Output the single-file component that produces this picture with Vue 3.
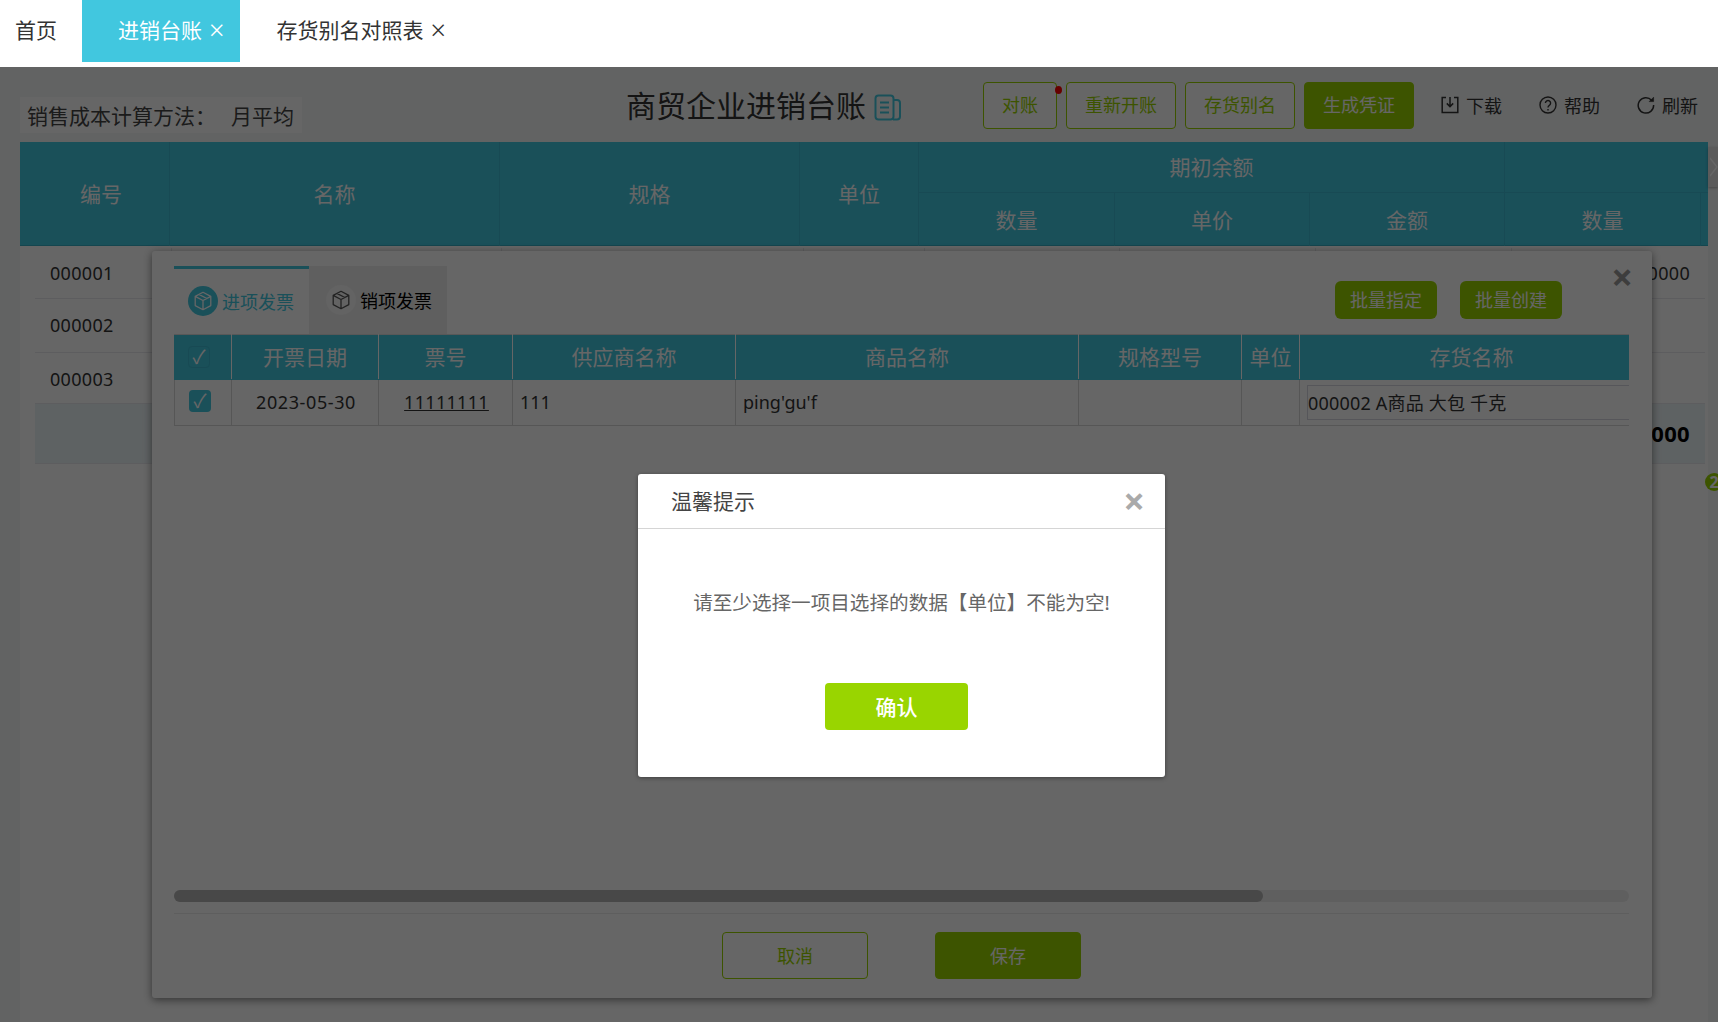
<template>
  <div class="page">
    <div class="tabs">
      <div class="tab tab-home">首页</div>
      <div class="tab tab-active">进销台账<span class="tab-x">×</span></div>
      <div class="tab">存货别名对照表<span class="tab-x">×</span></div>
    </div>

    <div class="main">
      <div class="toolbar">
        <div class="method"><span class="method-label">销售成本计算方法：</span>月平均</div>
        <div class="title">商贸企业进销台账</div>
        <svg class="title-icon" viewBox="0 0 28 27" fill="none" stroke="#41c7df" stroke-width="2">
          <rect x="1.5" y="1.5" width="18" height="24" rx="3" />
          <path d="M20 6h3a3 3 0 0 1 3 3v13.5a3 3 0 0 1-3 3h-4" />
          <path d="M6 8.5h9M6 13.5h9M6 18.5h9" />
        </svg>
        <div class="actions">
          <button class="btn btn-dot">对账<i class="dot"></i></button>
          <button class="btn">重新开账</button>
          <button class="btn">存货别名</button>
          <button class="btn btn-solid">生成凭证</button>
        </div>
        <div class="links">
          <span class="link link-down">
            <svg viewBox="0 0 18 18" fill="none" stroke="#333" stroke-width="1.5">
              <path d="M5 1.5H1.2v15h15.6v-15H13" />
              <path d="M9 1v9M5.8 7.4 9 10.6l3.2-3.2" />
            </svg>下载
          </span>
          <span class="link link-help">
            <svg viewBox="0 0 18 18" fill="none" stroke="#333" stroke-width="1.4">
              <circle cx="9" cy="9" r="8" />
              <path d="M6.4 7a2.6 2.6 0 1 1 3.9 2.3c-.9.5-1.3 1-1.3 2.2" />
              <path d="M9 13v1.4" />
            </svg>帮助
          </span>
          <span class="link link-refresh">
            <svg viewBox="0 0 18 18" fill="none" stroke="#333" stroke-width="1.5">
              <path d="M14.6 4.2A7.7 7.7 0 1 0 16.6 9" />
              <path d="M16.6 1.2v4.4h-4.4z" fill="#333" stroke-width="0.6" />
            </svg>刷新
          </span>
        </div>
      </div>

      <div class="sheet">
        <div class="grid-head">
          <div class="hc span-2 hc-code">编号</div>
          <div class="hc span-2">名称</div>
          <div class="hc span-2">规格</div>
          <div class="hc span-2">单位</div>
          <div class="hc group">期初余额</div>
          <div class="hc group-rest"></div>
          <div class="hc">数量</div>
          <div class="hc">单价</div>
          <div class="hc">金额</div>
          <div class="hc">数量</div>
          <div class="hc hc-scroll"></div>
        </div>
        <div class="grid-body">
          <div v-for="row in rows" :key="row.code" class="row" :class="row.cls">
            <div class="cell cell-code">{{ row.code }}</div>
            <div class="cell"></div>
            <div class="cell"></div>
            <div class="cell"></div>
            <div class="cell"></div>
            <div class="cell"></div>
            <div class="cell"></div>
            <div class="cell cell-end">{{ row.end }}</div>
          </div>
        </div>
      </div>

      <div class="side-arrow">
        <svg viewBox="0 0 8 24" fill="none" stroke="#fff" stroke-width="1.4"><path d="M0 3l7 9-7 9" /></svg>
      </div>
      <div class="badge">2</div>
    </div>

    <div class="invoice-modal">
      <span class="modal-close">×</span>
      <div class="modal-top">
        <div class="inv-tab inv-tab-on">
          <span class="cube cube-on">
            <svg viewBox="0 0 24 24" fill="none" stroke="#fff" stroke-width="1.4" stroke-linejoin="round">
              <path d="M12 2.5 20.5 7v10L12 21.5 3.5 17V7zM3.5 7 12 11.5 20.5 7M12 11.5v10M7.5 4.8l8.7 4.5" />
            </svg>
          </span>进项发票
        </div>
        <div class="inv-tab inv-tab-off">
          <span class="cube cube-off">
            <svg viewBox="0 0 24 24" fill="none" stroke="#555" stroke-width="1.4" stroke-linejoin="round">
              <path d="M12 2.5 20.5 7v10L12 21.5 3.5 17V7zM3.5 7 12 11.5 20.5 7M12 11.5v10M7.5 4.8l8.7 4.5" />
            </svg>
          </span>销项发票
        </div>
        <div class="modal-actions">
          <button class="btn-small">批量指定</button>
          <button class="btn-small">批量创建</button>
        </div>
      </div>

      <div class="inv-wrap">
        <table class="inv-table">
          <colgroup>
            <col v-for="w in colWidths" :key="w.k" :style="{ width: w.v + 'px' }" />
          </colgroup>
          <thead>
            <tr>
              <th><span class="check check-head">✓</span></th>
              <th>开票日期</th>
              <th>票号</th>
              <th>供应商名称</th>
              <th>商品名称</th>
              <th>规格型号</th>
              <th>单位</th>
              <th>存货名称</th>
            </tr>
          </thead>
          <tbody>
            <tr>
              <td><span class="check check-on">✓</span></td>
              <td class="center date">2023-05-30</td>
              <td class="center ticket"><u>11111111</u></td>
              <td>111</td>
              <td>ping'gu'f</td>
              <td></td>
              <td></td>
              <td class="td-input"><div class="fake-input">000002 A商品 大包 千克</div></td>
            </tr>
          </tbody>
        </table>
      </div>

      <div class="scroll-track"><div class="scroll-thumb"></div></div>
      <div class="modal-foot">
        <button class="foot-btn">取消</button>
        <button class="foot-btn foot-save">保存</button>
      </div>
    </div>

    <div class="shade"></div>

    <div class="dialog">
      <div class="dialog-head">
        <span>温馨提示</span>
        <span class="dialog-close">×</span>
      </div>
      <div class="dialog-msg">请至少选择一项目选择的数据【单位】不能为空!</div>
      <button class="dialog-ok">确认</button>
    </div>
  </div>
</template>

<script setup>
const rows = [
  { code: '000001', end: '0000', cls: 'row-a' },
  { code: '000002', end: '', cls: 'row-b' },
  { code: '000003', end: '', cls: 'row-c' },
  { code: '', end: '000', cls: 'row-sum' }
];

const colWidths = [
  { k: 'check', v: 57 },
  { k: 'date', v: 147 },
  { k: 'no', v: 134 },
  { k: 'supplier', v: 223 },
  { k: 'goods', v: 343 },
  { k: 'spec', v: 163 },
  { k: 'unit', v: 58 },
  { k: 'stock', v: 344 }
];
</script>

<style>
html,
body {
  margin: 0;
  overflow: hidden;
}
</style>

<style scoped>
.page {
  position: relative;
  width: 1718px;
  height: 1022px;
  overflow: hidden;
  background: #fff;
  color: #333;
  font-family: "Noto Sans", "Noto Sans CJK SC", sans-serif;
}

button {
  font-family: inherit;
  padding: 0 0 2px;
  border: none;
  cursor: pointer;
}

/* top tabs */
.tabs {
  display: flex;
  align-items: flex-start;
  height: 67px;
  background: #fff;
}

.tab {
  display: flex;
  align-items: center;
  box-sizing: border-box;
  height: 62px;
  padding: 0 36px 4px;
  font-size: 21px;
  color: #333;
}

.tab-home {
  padding: 0 25px 4px 15px;
}

.tab-active {
  padding-right: 16px;
  background: #41c7df;
  color: #fff;
}

.tab-x {
  margin-left: 7px;
  font-size: 27px;
  font-weight: 300;
  line-height: 1;
}

/* page behind the modals */
.main {
  position: relative;
  height: 955px;
  background: #f6f8f8;
}

.toolbar {
  display: flex;
  align-items: flex-start;
  height: 75px;
}

.method {
  display: flex;
  align-items: center;
  width: 275px;
  height: 36px;
  margin: 30px 0 0 20px;
  padding-left: 7px;
  background: #fff;
  font-size: 21px;
  color: #444;
}

.method-label {
  width: 204px;
}

.title {
  margin: 18px 0 0 324px;
  font-size: 30px;
  line-height: 42px;
  color: #333;
}

.title-icon {
  width: 28px;
  height: 27px;
  margin: 27px 0 0 8px;
}

.actions {
  display: flex;
  gap: 9px;
  margin: 15px 0 0 81px;
}

.btn {
  position: relative;
  width: 110px;
  height: 47px;
  padding-bottom: 4px;
  border: 1px solid #9ad300;
  border-radius: 4px;
  background: #fff;
  color: #9ad300;
  font-size: 18px;
}

.btn-dot {
  width: 74px;
}

.btn-solid {
  background: #9ad300;
  color: #fff;
}

.dot {
  position: absolute;
  top: 3px;
  right: -6px;
  width: 7px;
  height: 8px;
  border-radius: 50%;
  background: #ff0000;
}

.links {
  display: flex;
  margin-top: 15px;
  font-size: 18px;
  color: #333;
}

.link {
  display: flex;
  align-items: center;
  gap: 7px;
  box-sizing: border-box;
  height: 47px;
  padding-bottom: 2px;
}

.link svg {
  width: 18px;
  height: 18px;
}

.link-down {
  margin-left: 27px;
}

.link-help {
  margin-left: 37px;
}

.link-refresh {
  margin-left: 37px;
}

.sheet {
  margin: 0 10px 0 20px;
}

.grid-head {
  display: grid;
  grid-template-columns: 150px 330px 300px 119px 196px 195px 195px 196px 7px;
  grid-template-rows: 51px 53px;
  background: #41c7df;
  color: #fff;
  font-size: 21px;
  border-bottom: 1px solid #35aec5;
  box-sizing: border-box;
  height: 104px;
}

.hc {
  display: flex;
  align-items: center;
  justify-content: center;
  box-sizing: border-box;
  padding-bottom: 2px;
  border-right: 1px solid #3cbad1;
}

.hc-code {
  padding-left: 13px;
}

.span-2 {
  grid-row: span 2;
}

.group {
  grid-column: span 3;
  border-bottom: 1px solid #3cbad1;
}

.group-rest {
  grid-column: span 2;
  border-bottom: 1px solid #3cbad1;
  border-right: none;
}

.hc-scroll {
  border-right: none;
}

.grid-body {
  padding-left: 15px;
  background: #fff;
  height: 776px;
}

.row {
  display: grid;
  grid-template-columns: 137px 330px 302px 121px 195px 196px 196px 190px;
  width: 1670px;
  border-bottom: 1px solid #e8e8ee;
  box-sizing: border-box;
  font-size: 18px;
  letter-spacing: 0.3px;
  color: #333;
}

.row-a {
  height: 53px;
  padding-top: 2px;
}

.row-b {
  height: 54px;
  padding-bottom: 2px;
}

.row-c {
  height: 51px;
  padding-top: 2px;
}

.row-sum {
  height: 60px;
  padding-bottom: 2px;
  background: #ecf4f7;
  color: #000;
  font-size: 22px;
  font-weight: 700;
}

.cell {
  display: flex;
  align-items: center;
  padding: 0 15px;
  box-sizing: border-box;
  border-right: 1px solid #e8e8ee;
}

.cell-end {
  justify-content: flex-end;
  padding-right: 12px;
  border-right: none;
}

.side-arrow {
  position: absolute;
  right: 0;
  top: 80px;
  width: 10px;
  height: 40px;
  display: flex;
  align-items: center;
  justify-content: flex-end;
  background: #e4e4e4;
  box-shadow: 0 1px 3px rgba(0, 0, 0, 0.3);
}

.side-arrow svg {
  width: 8px;
  height: 24px;
}

.badge {
  position: absolute;
  left: 1705px;
  top: 406px;
  width: 18px;
  height: 18px;
  border-radius: 50%;
  background: #9ad300;
  color: #fff;
  font-size: 16px;
  font-weight: 700;
  line-height: 18px;
  text-align: center;
}

/* invoice modal */
.invoice-modal {
  position: absolute;
  left: 152px;
  top: 251px;
  width: 1500px;
  height: 747px;
  display: flex;
  flex-direction: column;
  box-sizing: border-box;
  padding: 15px 21px 0 22px;
  background: #fff;
  border-radius: 3px;
  box-shadow: 0 2px 8px rgba(0, 0, 0, 0.5);
}

.modal-close {
  position: absolute;
  right: 19px;
  top: 6px;
  font-size: 38px;
  font-weight: 700;
  line-height: 38px;
  color: #999;
}

.modal-top {
  display: flex;
  align-items: flex-start;
  height: 68px;
}

.inv-tab {
  display: flex;
  align-items: center;
  box-sizing: border-box;
  height: 69px;
  padding-bottom: 2px;
  font-size: 18px;
}

.inv-tab-on {
  width: 135px;
  padding-left: 14px;
  border-top: 3px solid #41c7df;
  color: #41c7df;
}

.inv-tab-off {
  width: 138px;
  padding-left: 17px;
  background: #eeeeee;
  color: #000;
}

.cube {
  display: flex;
  align-items: center;
  justify-content: center;
  width: 30px;
  height: 30px;
  margin-right: 4px;
  border-radius: 50%;
}

.cube svg {
  width: 22px;
  height: 22px;
}

.cube-on {
  background: #41c7df;
}

.cube-off {
  background: #f7f7f7;
}

.modal-actions {
  display: flex;
  gap: 23px;
  margin: 15px 0 0 888px;
}

.btn-small {
  width: 102px;
  height: 38px;
  border-radius: 6px;
  background: #9ad300;
  color: #fff;
  font-size: 18px;
}

.inv-wrap {
  width: 1455px;
  overflow: hidden;
}

.inv-table {
  width: 1469px;
  table-layout: fixed;
  border-collapse: collapse;
  font-size: 18px;
  color: #333;
}

.inv-table th {
  height: 45px;
  box-sizing: border-box;
  padding: 0;
  background: #41c7df;
  border: 1px solid #fff;
  border-color: #ddd #fff #41c7df #fff;
  color: #fff;
  font-size: 21px;
  line-height: 30px;
  font-weight: 400;
}

.inv-table th:first-child {
  border-left-color: #41c7df;
}

.inv-table td {
  height: 46px;
  padding: 0 7px 1px;
  box-sizing: border-box;
  border: 1px solid #d8d8d8;
  line-height: 30px;
  text-align: left;
}

.inv-table td:first-child {
  padding: 0;
}

.inv-table .center {
  text-align: center;
}

.inv-table .date {
  letter-spacing: 0.6px;
  padding-left: 9px;
}

.inv-table .ticket {
  letter-spacing: 0.3px;
  padding-left: 9px;
}

.check {
  display: flex;
  align-items: center;
  justify-content: center;
  box-sizing: border-box;
  width: 22px;
  height: 22px;
  margin: -3px 0 0 14px;
  border-radius: 4px;
  color: #fff;
  font-size: 19px;
  font-weight: 400;
  line-height: 1;
}

.check-on {
  background: #41c7df;
}

.check-head {
  margin: 0 0 0 13px;
  border: 1px solid #3cbad1;
}

.inv-table .td-input {
  padding: 0 0 0 7px;
}

.fake-input {
  display: flex;
  align-items: center;
  box-sizing: border-box;
  height: 35px;
  padding: 0;
  border: 1px solid #d8d8e0;
  border-right: none;
  letter-spacing: 0.2px;
  white-space: nowrap;
}

.scroll-track {
  width: 1455px;
  height: 12px;
  margin-top: auto;
  border-radius: 6px;
  background: #eeeeee;
}

.scroll-thumb {
  width: 1089px;
  height: 12px;
  border-radius: 6px;
  background: #b4b4b4;
}

.modal-foot {
  display: flex;
  justify-content: center;
  gap: 67px;
  width: 1455px;
  height: 85px;
  margin-top: 11px;
  padding-top: 18px;
  box-sizing: border-box;
  border-top: 1px solid #eaeaea;
}

.foot-btn {
  width: 146px;
  height: 47px;
  border: 1px solid #9ad300;
  border-radius: 4px;
  background: #fff;
  color: #9ad300;
  font-size: 18px;
}

.foot-save {
  background: #9ad300;
  color: #fff;
}

/* dim layer and alert */
.shade {
  position: absolute;
  left: 0;
  top: 67px;
  right: 0;
  bottom: 0;
  background: rgba(0, 0, 0, 0.6);
}

.dialog {
  position: absolute;
  left: 638px;
  top: 474px;
  width: 527px;
  height: 303px;
  display: flex;
  flex-direction: column;
  align-items: center;
  box-sizing: border-box;
  background: #fff;
  border-radius: 3px;
  box-shadow: 0 1px 4px rgba(0, 0, 0, 0.4);
}

.dialog-head {
  display: flex;
  align-items: center;
  justify-content: space-between;
  align-self: stretch;
  box-sizing: border-box;
  height: 55px;
  padding: 0 20px 2px 33px;
  border-bottom: 1px solid #d5d5d5;
  font-size: 21px;
  color: #444;
}

.dialog-close {
  font-size: 38px;
  font-weight: 700;
  line-height: 1;
  color: #aaa;
}

.dialog-msg {
  margin-top: 59px;
  font-size: 19.6px;
  line-height: 30px;
  color: #666;
}

.dialog-ok {
  width: 143px;
  height: 47px;
  margin: 65px 10px 0 0;
  border-radius: 4px;
  background: #99d500;
  color: #fff;
  font-size: 21px;
  font-weight: 500;
}
</style>
